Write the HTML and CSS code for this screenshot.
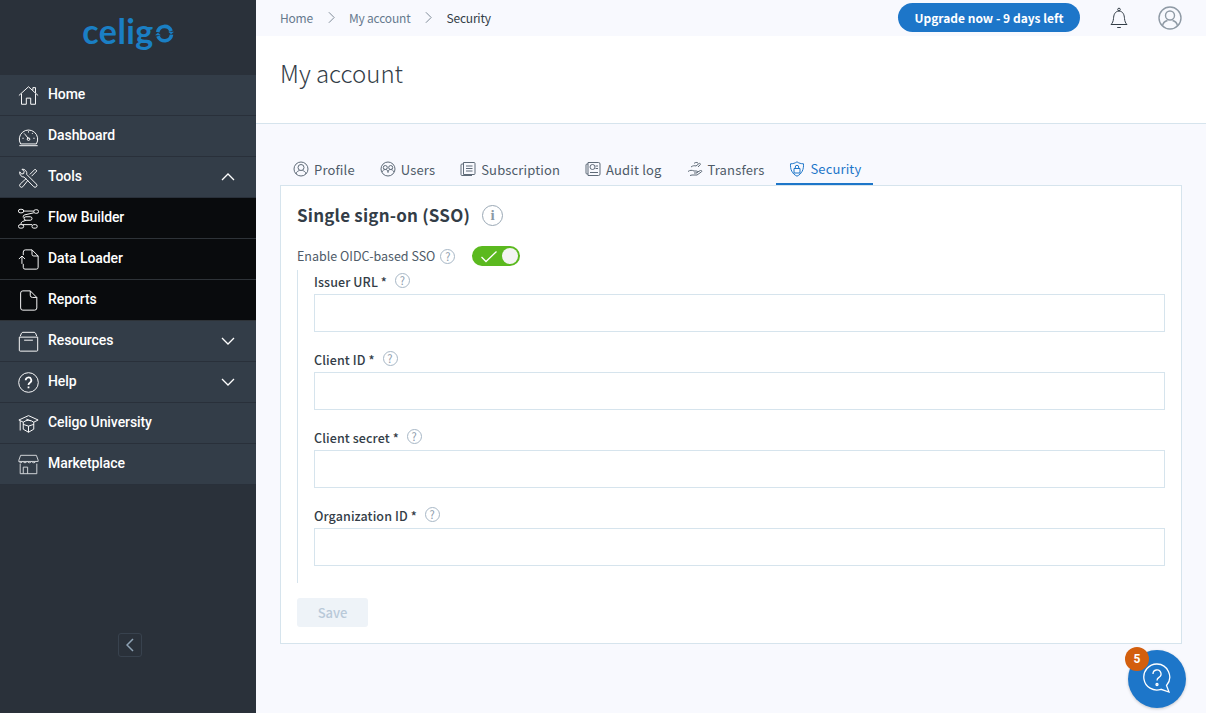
FILE: index.html
```html
<!DOCTYPE html>
<html lang="en">
<head>
    <meta charset="UTF-8">
    <title>My account - Security</title>
    <link rel="stylesheet" href="styles.css">
</head>
<body>
<div class="app">
    <!-- Left navigation -->
    <aside class="sidebar">
        <div class="logo">
            <span>celig</span><svg class="logo-o" width="19" height="19" viewBox="0 0 26 26" fill="none" stroke="#1a7fc4" stroke-width="5"><path d="M3.600 11A9.600 9.600 0 0 1 22 9.600"/><path d="M22.600 14.500A9.600 9.600 0 0 1 4 16.500"/><path d="M18 10.500h8l-4 3.500zM0 15.500h8l-4-3.500z" fill="#1a7fc4" stroke="none"/></svg>
        </div>
        <nav class="nav">
            <a class="nav-item">
                <svg class="nav-icon" viewBox="0 0 24 24"><path d="M1 12 12 2l11 10M4 10v12h5.500v-7h5v7H20V10M17 6V3h3v6"/></svg>
                Home
            </a>
            <a class="nav-item">
                <svg class="nav-icon" viewBox="0 0 24 24"><path d="M3 20.500a10.500 10.500 0 1 1 18 0zM1.500 22.500h21M12 14.500 8 9.500M5 14h1.500M17.500 14H19M7 8.500l1 1M16 9l1-1M12 6v1.500"/><circle cx="12" cy="15" r="1.500"/></svg>
                Dashboard
            </a>
            <a class="nav-item">
                <svg class="nav-icon" viewBox="0 0 24 24"><path d="M2 5.500 4 8l2.500-.5L7 5 4.500 2.500A5 5 0 0 1 10 8.500l11 11a2 2 0 0 1-3 3l-11-11A5 5 0 0 1 2 5.500zM13.500 8.500 19.500 2.500l2 2-6 6M9.500 13 2.500 19.500a2 2 0 0 0 3 3L11.500 15"/></svg>
                Tools
                <svg class="chevron" viewBox="0 0 14 8"><path d="M1 7l6-6 6 6"/></svg>
            </a>
            <a class="nav-item sub">
                <svg class="nav-icon" viewBox="0 0 24 24"><path d="M6 3.500h12M20 2h1.500a2 2 0 0 1 0 4H20a2 2 0 0 1 0-4zM2.500 1.500h2a2 2 0 0 1 0 4h-2a2 2 0 0 1 0-4zM18 5.500 7 8a3 3 0 0 0-1 3M9 10h5a2 2 0 0 1 0 4H9a2 2 0 0 1 0-4zM9 14l-4 1.500a3 3 0 0 0-1.500 3.500M5 19h11M2.500 19h2a2 2 0 0 1 0 4h-2a2 2 0 0 1 0-4zM18 19h2a2 2 0 0 1 0 4h-2a2 2 0 0 1 0-4z"/></svg>
                Flow Builder
            </a>
            <a class="nav-item sub">
                <svg class="nav-icon" viewBox="0 0 24 24"><path d="M6 7V3.500A2.500 2.500 0 0 1 8.500 1H16l7 7v13a2 2 0 0 1-2 2H8a2 2 0 0 1-2-2v-4M16 1v5a2 2 0 0 0 2 2h5M1 11.500 4.500 8 8 11.500M4.500 8v9"/></svg>
                Data Loader
            </a>
            <a class="nav-item sub">
                <svg class="nav-icon" viewBox="0 0 24 24"><path d="M3 3.500A2.500 2.500 0 0 1 5.500 1H14l7.500 7.500V20.500a2.500 2.500 0 0 1-2.500 2.500H5.500A2.500 2.500 0 0 1 3 20.500zM14 1v5a2.500 2.500 0 0 0 2.500 2.500h5"/></svg>
                Reports
            </a>
            <a class="nav-item">
                <svg class="nav-icon" viewBox="0 0 24 24"><path d="M2.500 6 4 2.500a2 2 0 0 1 1.500-1h13a2 2 0 0 1 1.500 1L21.500 6M1.500 7h21v15a1 1 0 0 1-1 1h-19a1 1 0 0 1-1-1zM7 10.500h10"/></svg>
                Resources
                <svg class="chevron" viewBox="0 0 14 8"><path d="M1 1l6 6 6-6"/></svg>
            </a>
            <a class="nav-item">
                <svg class="nav-icon" viewBox="0 0 24 24"><circle cx="12" cy="12" r="11.200"/><path class="thick" d="M8.800 9.500a3.200 3.200 0 1 1 4.800 2.700c-1 .7-1.600 1.200-1.600 2.600M12 16.500v2"/></svg>
                Help
                <svg class="chevron" viewBox="0 0 14 8"><path d="M1 1l6 6 6-6"/></svg>
            </a>
            <a class="nav-item">
                <svg class="nav-icon" viewBox="0 0 24 24"><path d="M1 8 12 3l11 5-5 2.500A10 10 0 0 0 6 10.500zM6 10.500v8l6 3.500 6-3.500v-8M12 22v-7M6 13l6 2 6-2M9.500 7l5 2M2.500 9v11"/></svg>
                Celigo University
            </a>
            <a class="nav-item">
                <svg class="nav-icon muted" viewBox="0 0 24 24"><path d="M3 1.500h18l2 5.500v1.500H1V7zM1 8.500c1 2 3.500 2 4.500 0 1 2 4 2 5 0 1 2 4 2 5 0 1 2 4 2 5 0M2.500 11v11.500h19V11M6 22.500v-7.500h5v7.500"/></svg>
                Marketplace
            </a>
        </nav>
        <div class="collapse">
            <button class="collapse-btn"><svg width="8" height="14" viewBox="0 0 8 14"><path d="M7 1 1 7l6 6"/></svg></button>
        </div>
    </aside>

    <main class="main">
        <header class="topbar">
            <div class="crumbs">
                <span>Home</span>
                <svg class="crumb-sep" viewBox="0 0 8 14"><path d="M1 1l6 6-6 6"/></svg>
                <span>My account</span>
                <svg class="crumb-sep" viewBox="0 0 8 14"><path d="M1 1l6 6-6 6"/></svg>
                <span class="current">Security</span>
            </div>
            <button class="upgrade">Upgrade now - 9 days left</button>
            <svg class="bell" viewBox="0 0 20 22"><path d="M2 17.500c1.500-1.500 2.200-3 2.500-6 .3-3.500 1-7 5.500-7.500 4.500.5 5.200 4 5.500 7.500.3 3 1 4.500 2.500 6zM8.200 20.500h3.600"/><circle cx="10" cy="2.500" r="1.300"/></svg>
            <svg class="avatar" viewBox="0 0 24 24"><circle cx="12" cy="12" r="11"/><circle cx="12" cy="9.500" r="4.500"/><path d="M4.500 20c.5-3.500 3-5 5-5.500M19.500 20c-.5-3.500-3-5-5-5.500"/></svg>
        </header>

        <section class="page-head">
            <h1>My account</h1>
        </section>

        <section class="content">
            <div class="tabs">
                <a class="tab">
                    <svg class="tab-icon" viewBox="0 0 16 16"><circle cx="8" cy="8" r="7"/><circle cx="8" cy="6.500" r="3"/><path d="M3 13c.5-2.500 2-3 3.500-3.500M13 13c-.5-2.500-2-3-3.500-3.500"/></svg>
                    Profile
                </a>
                <a class="tab">
                    <svg class="tab-icon" viewBox="0 0 16 16"><circle cx="8" cy="8" r="7"/><circle cx="5.300" cy="6.500" r="2"/><circle cx="10.700" cy="6.500" r="2"/><path d="M2 11c.5-1.500 2-2.500 3.500-2.500S8 9.500 8 11.500M14 11c-.5-1.500-2-2.500-3.500-2.500S8 9.500 8 11.500"/></svg>
                    Users
                </a>
                <a class="tab">
                    <svg class="tab-icon" viewBox="0 0 16 16"><path d="M3.500 1.500h10.500a1 1 0 0 1 1 1v10a1 1 0 0 1-1 1H3.500zM3.500 3H2a1 1 0 0 0-1 1v9.500a1 1 0 0 0 1 1h10M6 5h6.500M6 7.500h6.500M6 10h6.500"/></svg>
                    Subscription
                </a>
                <a class="tab">
                    <svg class="tab-icon" viewBox="0 0 16 16"><path d="M3 1.500h10.500a1.500 1.500 0 0 1 1.500 1.500v10a1.500 1.500 0 0 1-1.500 1.500H3zM3 3H2a1 1 0 0 0-1 1v8a1 1 0 0 0 1 1h1M10.500 5H13M10.500 7.500H13M5 11.500h8"/><circle cx="7.500" cy="6" r="2.500"/></svg>
                    Audit log
                </a>
                <a class="tab">
                    <svg class="tab-icon" viewBox="0 0 16 16"><path d="M1 10.500c2-1.500 4-1.500 6-.5h2.500a1 1 0 0 1 0 2H7M9.500 11.500l4-2c1-.3 1.800.6 1 1.300L10 14H5l-2 .5M4 6c2-1.500 3.500-1.500 5-1l3-2.500c1-.5 2 .5 1.200 1.200L11 6M7 2.500C8 1.500 9.500 1 11 2"/></svg>
                    Transfers
                </a>
                <a class="tab active">
                    <svg class="tab-icon" viewBox="0 0 16 16"><path d="M8 .8c2 1.400 4 2 6.500 2 .3 5.500-1.500 10-6.500 12.400C3 12.800 1.200 8.300 1.500 2.800 4 2.800 6 2.200 8 .8z"/><path d="M5 7.500h6v4.500H5zM6.300 7.500V6a1.700 1.700 0 0 1 3.400 0v1.500"/></svg>
                    Security
                </a>
            </div>

            <div class="card">
                <div class="card-title">
                    <h2>Single sign-on (SSO)</h2>
                    <span class="info">i</span>
                </div>

                <div class="toggle-row">
                    <span class="toggle-label">Enable OIDC-based SSO</span>
                    <span class="hint">?</span>
                    <span class="toggle">
                        <svg width="18" height="13" viewBox="0 0 18 13"><path d="M1.500 7l4.500 4.500L16.500 1.500"/></svg>
                        <span class="knob"></span>
                    </span>
                </div>

                <div class="fields">
                    <div class="field">
                        <label>Issuer URL * <span class="hint">?</span></label>
                        <input type="text">
                    </div>
                    <div class="field">
                        <label>Client ID * <span class="hint">?</span></label>
                        <input type="text">
                    </div>
                    <div class="field">
                        <label>Client secret * <span class="hint">?</span></label>
                        <input type="text">
                    </div>
                    <div class="field">
                        <label>Organization ID * <span class="hint">?</span></label>
                        <input type="text">
                    </div>
                </div>

                <button class="save" disabled>Save</button>
            </div>
        </section>
    </main>

    <!-- Floating help button -->
    <button class="fab">
        <span class="fab-badge">5</span>
        <svg width="30" height="32" viewBox="0 0 30 32"><path d="M15 2a13 13 0 1 0 4 25.300L27 30l-2.500-6.500A13 13 0 0 0 15 2z"/><path d="M11 12a4 4 0 1 1 6 3.400c-1.300.8-2 1.400-2 3"/><circle cx="15" cy="22.500" r="1"/></svg>
    </button>
</div>
</body>
</html>
```

FILE: styles.css
```css
* {
    box-sizing: border-box;
}
body {
    margin: 0;
    font-family: "Noto Sans CJK SC", "Open Sans", sans-serif;
    color: #333d47;
    background: #f8f9fe;
}
.app {
    display: flex;
    height: 713px;
    overflow: hidden;
    position: relative;
}

/* Sidebar */
.sidebar {
    width: 256px;
    flex: none;
    background: #2a313a;
    display: flex;
    flex-direction: column;
    font-family: Roboto, sans-serif;
}
.logo {
    height: 75px;
    display: flex;
    justify-content: center;
    align-items: center;
    gap: 1px;
    padding: 0 0 14px 0;
    font-family: Lato, sans-serif;
    font-size: 34px;
    font-weight: 700;
    letter-spacing: 0.4px;
    color: #1a7fc4;
}
.logo-o {
    margin-top: 5px;
}
.nav-item {
    height: 41px;
    display: flex;
    align-items: center;
    padding: 0 20px 2px 18px;
    background: #333d48;
    border-bottom: 1px solid #29303a;
    color: #fff;
    font-size: 14px;
    font-weight: 500;
    letter-spacing: -0.08px;
}
.nav-item.sub {
    background: #090b0d;
    border-bottom-color: #2e3338;
}
.nav-icon {
    width: 21px;
    height: 21px;
    margin: 2px 9px 0 0;
    flex: none;
    fill: none;
    stroke: #fff;
    stroke-width: 1.100;
}
.nav-icon.muted {
    stroke: #d5d8dc;
}
.nav-icon .thick {
    stroke-width: 2;
}
.chevron {
    width: 14px;
    height: 8px;
    margin: 2px 1px 0 auto;
    fill: none;
    stroke: #fff;
    stroke-width: 1.300;
}
.collapse {
    margin-top: auto;
    padding: 0 0 56px 4px;
    display: flex;
    justify-content: center;
}
.collapse-btn {
    width: 24px;
    height: 24px;
    padding: 0;
    display: flex;
    align-items: center;
    justify-content: center;
    background: transparent;
    border: 1px solid #38424e;
    border-radius: 3px;
}
.collapse-btn path {
    fill: none;
    stroke: #8fa3b5;
    stroke-width: 1.500;
}

/* Top bar */
.main {
    flex: 1;
    min-width: 0;
}
.topbar {
    height: 36px;
    display: flex;
    align-items: center;
    padding: 0 24px 1px;
    background: #f8f9fe;
}
.crumbs {
    display: flex;
    align-items: center;
    font-size: 12px;
    letter-spacing: -0.2px;
    color: #677a8e;
    margin-right: auto;
}
.crumbs .current {
    color: #333d47;
}
.crumb-sep {
    width: 7px;
    height: 13px;
    margin: 0 14px 0 15px;
    fill: none;
    stroke: #7b8794;
    stroke-width: 1.100;
}
.upgrade {
    width: 182px;
    height: 29px;
    margin-right: 29px;
    border: none;
    border-radius: 15px;
    background: #1d76c9;
    color: #fff;
    font-family: inherit;
    font-size: 12px;
    font-weight: 700;
}
.bell {
    width: 20px;
    height: 22px;
    margin-right: 29px;
    fill: none;
    stroke: #333d47;
    stroke-width: 1;
}
.avatar {
    width: 24px;
    height: 24px;
    fill: none;
    stroke: #8f9aa5;
    stroke-width: 1.400;
}

/* Page heading */
.page-head {
    height: 88px;
    padding: 18px 24px 0;
    background: #fff;
    border-bottom: 1px solid #d6e4ed;
}
h1 {
    margin: 0;
    font-size: 24px;
    line-height: 38px;
    font-weight: 300;
    color: #333d47;
}

/* Tabs */
.content {
    padding: 30px 24px 0;
}
.tabs {
    display: flex;
    height: 31px;
}
.tab {
    display: flex;
    align-items: center;
    gap: 5px;
    height: 30px;
    padding: 0 12px 0 13px;
    font-size: 13px;
    letter-spacing: 0.15px;
    color: #4e5b68;
}
.tab.active {
    color: #1d76c9;
    border-bottom: 2px solid #1d76c9;
    height: 31px;
}
.tab-icon {
    width: 16px;
    height: 16px;
    fill: none;
    stroke: #5f6b78;
    stroke-width: 1;
}
.tab.active .tab-icon {
    stroke: #1d76c9;
}

/* Card */
.card {
    width: 902px;
    height: 459px;
    padding: 15px 16px 0;
    background: #fff;
    border: 1px solid #d6e4ed;
}
.card-title {
    display: flex;
    align-items: center;
    height: 28px;
}
h2 {
    margin: -2px 0 0;
    font-size: 17px;
    font-weight: 700;
    letter-spacing: 0.2px;
    color: #333d47;
}
.info {
    width: 21px;
    height: 21px;
    margin-left: 12px;
    display: flex;
    align-items: center;
    justify-content: center;
    border: 1.500px solid #9aa8b5;
    border-radius: 50%;
    font-family: "Liberation Serif", serif;
    font-size: 15px;
    font-weight: 700;
    color: #8b99a6;
}
.hint {
    display: inline-flex;
    align-items: center;
    justify-content: center;
    width: 15px;
    height: 15px;
    border: 1px solid #a7b7c6;
    border-radius: 50%;
    font-size: 11px;
    font-weight: 400;
    color: #8b9bab;
    vertical-align: 2px;
}
.toggle-row {
    display: flex;
    align-items: center;
    height: 20px;
    margin-top: 17px;
    font-size: 12.500px;
    color: #4e5b68;
}
.toggle-label {
    margin: -2px 5px 0 0;
}
.toggle {
    width: 48px;
    height: 20px;
    margin-left: 17px;
    padding: 0 2px 0 8px;
    display: flex;
    align-items: center;
    justify-content: space-between;
    border-radius: 10px;
    background: #5bb91f;
}
.toggle path {
    fill: none;
    stroke: #fff;
    stroke-width: 1.300;
}
.knob {
    width: 16px;
    height: 16px;
    border-radius: 50%;
    background: #f3f4f2;
}

/* Fields */
.fields {
    height: 313px;
    margin-top: 4px;
    padding: 2px 0 0 16px;
    border-left: 1px solid #d6e4ed;
}
.field {
    height: 78px;
}
.field label {
    display: block;
    height: 22px;
    font-size: 12.500px;
    font-weight: 500;
    line-height: 20px;
    letter-spacing: 0.1px;
    color: #333d47;
}
.field label .hint {
    margin-left: 5px;
}
.field input {
    display: block;
    width: 100%;
    height: 38px;
    border: 1px solid #d6e4ed;
    background: #fff;
}
.save {
    display: block;
    width: 71px;
    height: 29px;
    margin-top: 15px;
    border: none;
    border-radius: 3px;
    background: #eef3f8;
    color: #b9c9d8;
    font-family: inherit;
    font-size: 13px;
    font-weight: 500;
}

/* Help button */
.fab {
    position: absolute;
    left: 1128px;
    top: 650px;
    width: 58px;
    height: 58px;
    padding: 0;
    border: none;
    border-radius: 50%;
    background: #1d76c9;
    box-shadow: 0 1px 3px rgba(0, 0, 0, 0.2);
    display: flex;
    align-items: center;
    justify-content: center;
}
.fab svg {
    margin-top: -3px;
    fill: none;
    stroke: #fff;
    stroke-width: 1.300;
}
.fab-badge {
    position: absolute;
    left: -3px;
    top: -3px;
    width: 24px;
    height: 24px;
    border-radius: 50%;
    background: #d35f0e;
    color: #fff;
    font-family: Roboto, sans-serif;
    font-size: 12px;
    font-weight: 700;
    line-height: 24px;
    text-align: center;
}
```
